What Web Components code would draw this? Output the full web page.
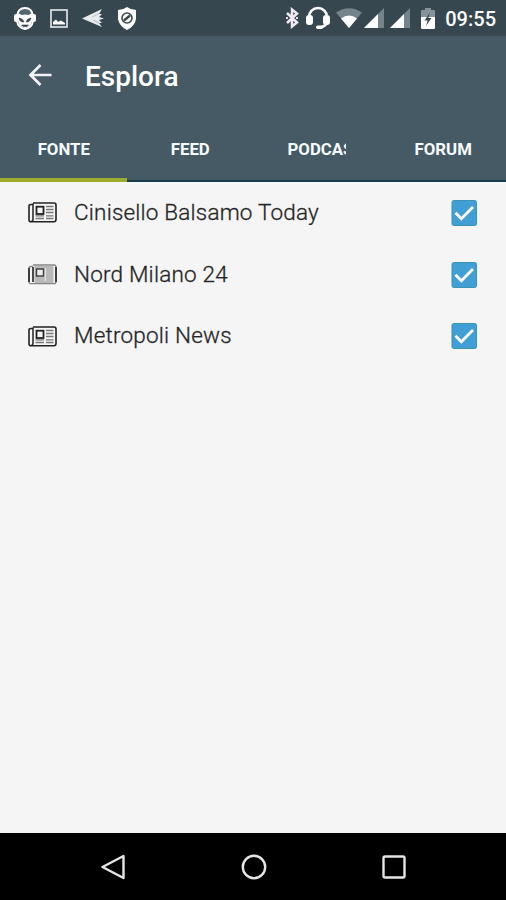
<!DOCTYPE html>
<html lang="it">
<head>
<meta charset="utf-8">
<meta name="viewport" content="width=device-width, initial-scale=1">
<title>Esplora</title>
<style>
  body {
    margin: 0;
    font-family: Roboto, "Liberation Sans", sans-serif;
    background: #f5f5f5;
  }
</style>
</head>
<body>
<explore-screen></explore-screen>
<script>
// [width, height, svg markup], drawn in its own pixel grid
const ICONS = {
  cat: [24, 23, `
    <path d="M4 9 Q5 1 12 1 Q19 1 20 9 V14 Q19 21 12 22 Q5 21 4 14Z" fill="#53656e" stroke="#fff" stroke-width="1.8"/>
    <path d="M5 6 L8.5 8 Q12 7 15.5 8 L19 6 V14 Q18 20 12 21 Q6 20 5 14Z" fill="#fff"/>
    <rect x="1" y="7" width="4" height="8" rx="2" fill="#fff"/>
    <rect x="19" y="7" width="4" height="8" rx="2" fill="#fff"/>
    <path d="M6 11 Q10 11.5 11 15 Q7 15.5 6 11Z M18 11 Q14 11.5 13 15 Q17 15.5 18 11Z M8.5 18 H15.5 L14 19.5 H10Z" fill="#37474f" stroke="#37474f" stroke-width=".6"/>`],
  image: [18, 19, `
    <rect x="1" y="1" width="16" height="17" fill="none" stroke="#dce2e5" stroke-width="1.7"/>
    <path d="M3 15.5 V13 L6 10.5 L8 13 L11 11.5 L15 14 V15.5Z" fill="#fff"/>`],
  bird: [22, 20, `
    <path d="M0 10.5 L20 1 L17 6 L20 6 L17 9 L22 10.5 L17 12 L20 15 L17 15 L20 19Z" fill="#e8ecee"/>
    <path d="M10 9 L18 5 M11 12 L18 15.5" stroke="#93a0a7" stroke-width=".6"/>`],
  shield: [20, 23, `
    <path d="M10 0 Q14 3 19 3 V12 Q18 19 10 23 Q2 19 1 12 V3 Q6 3 10 0Z" fill="#fff"/>
    <circle cx="10" cy="11" r="5" fill="none" stroke="#37474f" stroke-width="1.6"/>
    <path d="M7 13.5 L13 8.5" stroke="#37474f" stroke-width="2.4"/>`],
  bluetooth: [14, 22, `
    <path d="M2 6 L12 15.5 L7 19.5 V2.5 L12 6.5 L2 16" fill="none" stroke="#f3e9f1" stroke-width="2.5"/>
    <path d="M1 11 H3 M11 11 H13" stroke="#dfe0e5" stroke-width="2"/>`],
  headset: [26, 24, `
    <path d="M4 12 V11 A9 9 0 0 1 22 11 V14 Q22 21 14 21.5" fill="none" stroke="#fff" stroke-width="2.7"/>
    <rect x="1" y="9" width="7" height="10" rx="3" fill="#fff"/>
    <rect x="18" y="9" width="7" height="10" rx="3" fill="#fff"/>
    <rect x="11" y="19.5" width="7" height="3.5" rx="1.7" fill="#fff"/>`],
  wifi: [26, 20, `
    <path d="M0 4.5 Q13-4 26 4.5 L13 20Z" fill="#75838a"/>
    <path d="M5 10.5 Q13 4.5 21 10.5 L13 20Z" fill="#fff"/>`],
  signal: [20, 20, `
    <path d="M20 0 V20 H0Z" fill="#75838a"/>
    <path d="M14 6 V20 H0Z" fill="#fff"/>`],
  battery: [14, 21, `
    <path d="M4 0 H10 V2 H13 Q14 2 14 3 V10 H0 V3 Q0 2 1 2 H4Z" fill="#87939a"/>
    <path d="M0 9 H14 V20 Q14 21 13 21 H1 Q0 21 0 20Z" fill="#fff"/>
    <path d="M9 4.5 L3.5 12.5 H6.7 L5 18 L10.5 10 H7.3Z" fill="#37474f"/>`],
  arrow: [26, 24, `
    <path d="M13.5 2 L3.5 12 L13.5 22 M4 12 H24.5" fill="none" stroke="#f5f3fa" stroke-width="2.7"/>`],
  news: [29, 21, `
    <path d="M5 1 H26 Q28 1 28 3 V17.5 Q28 19.7 26 19.7 H3 Q1 19.7 1 17.7 V4 Q1 2.5 3 2.5 H5" fill="none" stroke="#222" stroke-width="1.6"/>
    <path d="M5 1.5 V17 Q5 19 3.5 19" fill="none" stroke="#222" stroke-width="1.5"/>
    <rect x="8.5" y="4.7" width="7" height="7.3" fill="none" stroke="#222" stroke-width="1.8"/>
    <path d="M18 4.5 H25.5 M18 7.5 H25.5 M18 10.5 H25.5 M7.5 13.8 H16 M18 13.8 H25.5 M7.5 16.5 H16 M18 16.5 H25.5" stroke="#777" stroke-width="1.3"/>`],
  newsFaded: [29, 21, `
    <rect x="6.5" y="2" width="19" height="17" fill="#b9b9b9"/>
    <path d="M5 1 H26 Q28 1 28 3 V17.5 Q28 19.7 26 19.7 H3 Q1 19.7 1 17.7 V4 Q1 2.5 3 2.5 H5" fill="none" stroke="#858585" stroke-width="1.3"/>
    <path d="M1 4 V18 M5 3 V18 M28 3 V18" stroke="#222" stroke-width="1.6"/>
    <rect x="8.5" y="5" width="7" height="7" fill="#eee" stroke="#444" stroke-width="1.5"/>
    <path d="M17.3 4 V17" stroke="#eee" stroke-width="1"/>`],
  check: [26, 26, `
    <rect x="1" y=".5" width="24.5" height="25" rx="1.8" fill="#429fd5" stroke="#3694b5"/>
    <path d="M4.5 12.8 L10.3 18.7 L22 7" fill="none" stroke="#fff" stroke-width="2.8"/>`],
  back: [26, 28, `
    <path d="M23.5 3 V25 L2.5 14Z" fill="none" stroke="#e6e6e6" stroke-width="2.4" stroke-linejoin="round"/>`],
  home: [26, 26, `
    <circle cx="13" cy="13" r="11.2" fill="none" stroke="#e6e6e6" stroke-width="2.4"/>`],
  recent: [26, 26, `
    <rect x="2.5" y="2.5" width="21" height="21" rx="1.5" fill="none" stroke="#e6e6e6" stroke-width="2.4"/>`]
};

class AppIcon extends HTMLElement {
  constructor() {
    super();
    this.attachShadow({ mode: 'open' });
  }

  connectedCallback() {
    const [w, h, body] = ICONS[this.getAttribute('name')];
    this.shadowRoot.innerHTML = `
      <style>
        :host { display: block; flex: none; }
        svg { display: block; }
      </style>
      <svg width="${w}" height="${h}" viewBox="0 0 ${w} ${h}" aria-hidden="true">${body}</svg>
    `;
  }
}

class StatusBar extends HTMLElement {
  constructor() {
    super();
    this.attachShadow({ mode: 'open' });
    this.shadowRoot.innerHTML = `
      <style>
        :host {
          display: flex;
          justify-content: space-between;
          height: 36px;
          padding: 0 10px 0 13px;
          box-sizing: border-box;
          background: #37474f;
          color: #fff;
        }
        .group {
          display: flex;
          align-items: center;
        }
        .notifications { gap: 13px; }
        .system { gap: 6px; }
        .clock {
          font-size: 20px;
          font-weight: 500;
          line-height: 36px;
          margin-left: 4px;
          padding-top: 2px;
        }
      </style>
      <div class="group notifications">
        <app-icon name="cat"></app-icon>
        <app-icon name="image"></app-icon>
        <app-icon name="bird" style="margin-left: 1px"></app-icon>
        <app-icon name="shield"></app-icon>
      </div>
      <div class="group system">
        <app-icon name="bluetooth"></app-icon>
        <app-icon name="headset"></app-icon>
        <app-icon name="wifi" style="margin-left: -1px"></app-icon>
        <app-icon name="signal" style="margin-left: -4px"></app-icon>
        <app-icon name="signal"></app-icon>
        <app-icon name="battery" style="margin-left: 5px"></app-icon>
        <span class="clock"><slot></slot></span>
      </div>
    `;
  }
}

class TitleBar extends HTMLElement {
  constructor() {
    super();
    this.attachShadow({ mode: 'open' });
    this.shadowRoot.innerHTML = `
      <style>
        :host {
          display: flex;
          align-items: center;
          gap: 58px;
          height: 81px;
          padding: 0 27px;
          background: #455a64;
          color: #fff;
        }
        app-icon { width: 0; padding-bottom: 3px; }
        h1 {
          margin: 0;
          font-size: 28px;
          font-weight: 500;
          line-height: 80px;
        }
      </style>
      <app-icon name="arrow"></app-icon>
      <h1><slot></slot></h1>
    `;
  }
}

class TabBar extends HTMLElement {
  constructor() {
    super();
    this.attachShadow({ mode: 'open' });
    this.shadowRoot.innerHTML = `
      <style>
        :host {
          display: grid;
          grid-template-columns: repeat(4, minmax(0, 1fr));
          height: 65px;
          background: #455a64;
          box-shadow: inset 0 -2px #173e4b;
        }
      </style>
      <slot></slot>
    `;
  }
}

class TabItem extends HTMLElement {
  constructor() {
    super();
    this.attachShadow({ mode: 'open' });
    this.shadowRoot.innerHTML = `
      <style>
        :host {
          display: block;
          box-sizing: border-box;
          padding: 0 33.5px 0 34.5px;
          color: #f6fbfd;
        }
        :host([selected]) { border-bottom: 4px solid #9dac2b; }
        .label {
          display: flex;
          justify-content: safe center;
          overflow: hidden;
          white-space: nowrap;
          font-size: 16.8px;
          font-weight: 700;
          line-height: 64px;
          height: 61px;
        }
      </style>
      <div class="label"><slot></slot></div>
    `;
  }
}

class SourceRow extends HTMLElement {
  constructor() {
    super();
    this.attachShadow({ mode: 'open' });
    this.shadowRoot.innerHTML = `
      <style>
        :host {
          display: flex;
          align-items: center;
          height: 61.8px;
          padding: 0 29px 0 28px;
          color: #262626;
        }
        .name {
          flex: 1;
          margin-left: 17px;
          padding-bottom: 2px;
          font-size: 22.5px;
          font-weight: 300;
          letter-spacing: .2px;
          -webkit-text-stroke: .3px;
          white-space: nowrap;
        }
      </style>
      <app-icon name="${this.getAttribute('icon') || 'news'}"></app-icon>
      <span class="name"><slot></slot></span>
      <app-icon name="check"></app-icon>
    `;
  }
}

class NavBar extends HTMLElement {
  constructor() {
    super();
    this.attachShadow({ mode: 'open' });
    this.shadowRoot.innerHTML = `
      <style>
        :host {
          display: flex;
          align-items: center;
          justify-content: center;
          gap: 114.5px;
          height: 67px;
          padding-left: 1px;
          background: #000;
        }
      </style>
      <app-icon name="back"></app-icon>
      <app-icon name="home"></app-icon>
      <app-icon name="recent"></app-icon>
    `;
  }
}

class ExploreScreen extends HTMLElement {
  constructor() {
    super();
    this.attachShadow({ mode: 'open' });
    this.shadowRoot.innerHTML = `
      <style>
        :host {
          display: flex;
          flex-direction: column;
          height: 900px;
          overflow: hidden;
        }
        main { flex: 1; }
      </style>
      <status-bar>09:55</status-bar>
      <title-bar>Esplora</title-bar>
      <tab-bar>
        <tab-item selected>FONTE</tab-item>
        <tab-item>FEED</tab-item>
        <tab-item>PODCAST</tab-item>
        <tab-item>FORUM</tab-item>
      </tab-bar>
      <main>
        <source-row>Cinisello Balsamo Today</source-row>
        <source-row icon="newsFaded">Nord Milano 24</source-row>
        <source-row>Metropoli News</source-row>
      </main>
      <nav-bar></nav-bar>
    `;
  }
}

customElements.define('app-icon', AppIcon);
customElements.define('status-bar', StatusBar);
customElements.define('title-bar', TitleBar);
customElements.define('tab-bar', TabBar);
customElements.define('tab-item', TabItem);
customElements.define('source-row', SourceRow);
customElements.define('nav-bar', NavBar);
customElements.define('explore-screen', ExploreScreen);
</script>
</body>
</html>
